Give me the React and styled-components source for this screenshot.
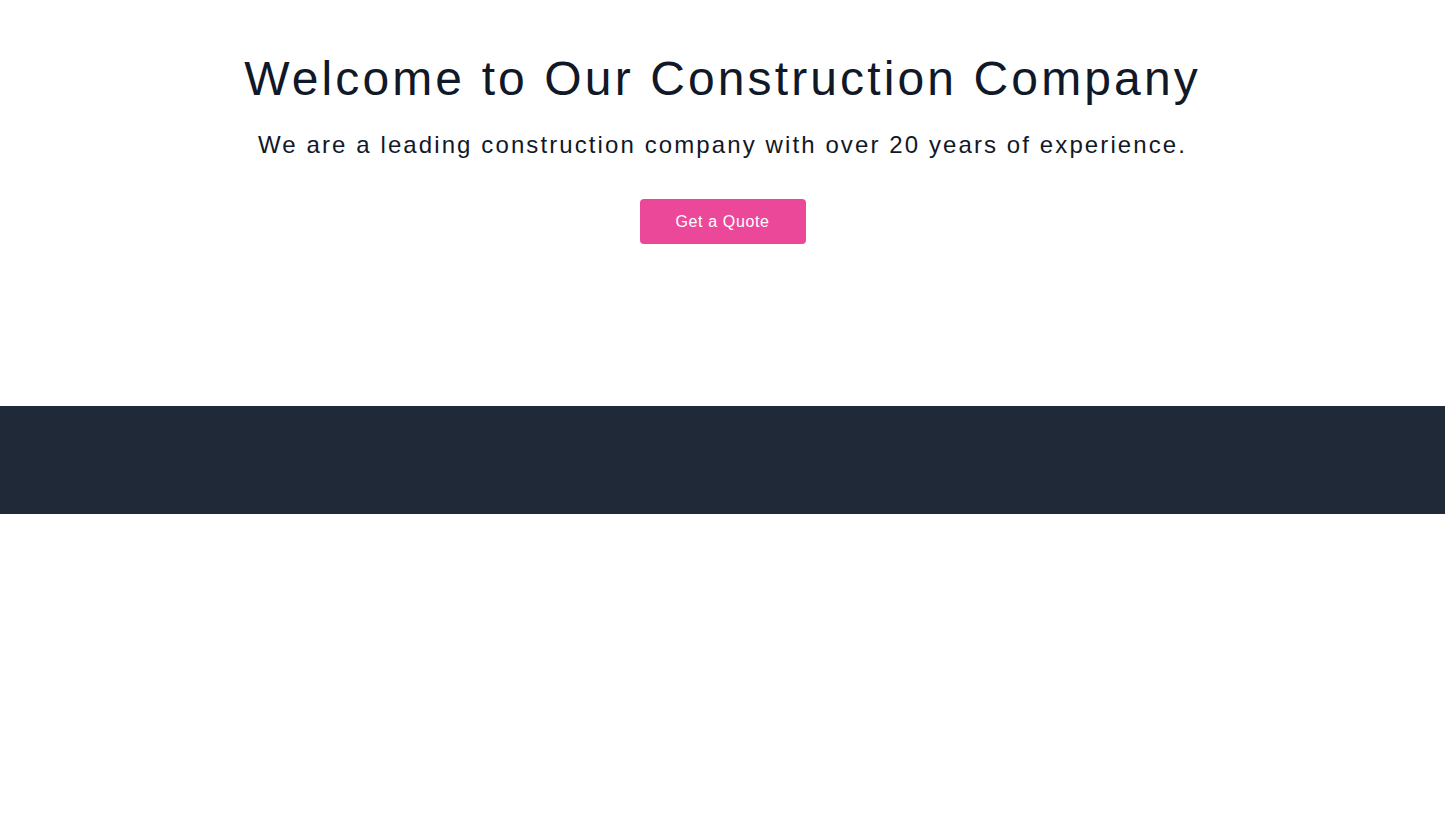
import React from 'react';
import styled, { createGlobalStyle } from 'styled-components';

const GlobalStyle = createGlobalStyle`
  html, body { margin: 0; padding: 0; background: #ffffff; }
  body { font-family: "Liberation Sans", Arial, sans-serif; color: #111827; }
  * { box-sizing: border-box; }
`;

const Hero = styled.section`
  height: 406px;
  display: flex;
  flex-direction: column;
  align-items: center;
  padding-top: 55px;
  text-align: center;
`;

const Title = styled.h1`
  margin: 0;
  font-size: 48px;
  line-height: 48px;
  font-weight: 400;
  letter-spacing: 0.065em;
  color: #111827;
  white-space: nowrap;
`;

const Subtitle = styled.p`
  margin: 26px 0 0;
  font-size: 24px;
  line-height: 32px;
  font-weight: 400;
  letter-spacing: 2.1px;
  color: #111827;
  white-space: nowrap;
`;

const QuoteButton = styled.button`
  margin-top: 38px;
  width: 166px;
  height: 45px;
  border: none;
  border-radius: 4px;
  background: #ec4899;
  color: #ffffff;
  font-family: "Liberation Sans", Arial, sans-serif;
  font-size: 16px;
  letter-spacing: 0.04em;
  cursor: pointer;
`;

const Footer = styled.footer`
  height: 108px;
  background: #1f2937;
`;

export default function App() {
  return (
    <>
      <GlobalStyle />
      <Hero>
        <Title>Welcome to Our Construction Company</Title>
        <Subtitle>We are a leading construction company with over 20 years of experience.</Subtitle>
        <QuoteButton>Get a Quote</QuoteButton>
      </Hero>
      <Footer />
    </>
  );
}
